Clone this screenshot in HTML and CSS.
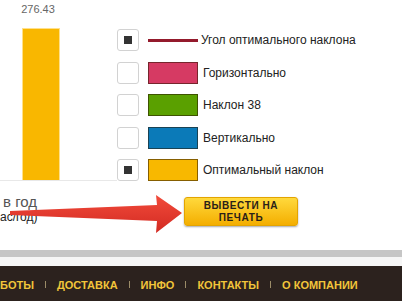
FILE: index.html
```html
<!doctype html>
<html lang="ru">
<head>
    <meta charset="UTF-8">
    <meta name="viewport" content="width=device-width, initial-scale=1.0">
    <title>Выработка</title>
    <link rel="stylesheet" href="styles.css">
</head>
<body>
<div class="chart-area">
    <div class="chart">
        <div class="bar-value">276.43</div>
        <div class="bar"></div>
    </div>
    <ul class="legend">
        <li class="legend-row">
            <span class="check checked"></span>
            <span class="line"></span>
            <span class="label label-line">Угол оптимального наклона</span>
        </li>
        <li class="legend-row">
            <span class="check"></span>
            <span class="swatch pink"></span>
            <span class="label">Горизонтально</span>
        </li>
        <li class="legend-row">
            <span class="check"></span>
            <span class="swatch green"></span>
            <span class="label">Наклон 38</span>
        </li>
        <li class="legend-row">
            <span class="check"></span>
            <span class="swatch blue"></span>
            <span class="label">Вертикально</span>
        </li>
        <li class="legend-row">
            <span class="check checked"></span>
            <span class="swatch yellow"></span>
            <span class="label">Оптимальный наклон</span>
        </li>
    </ul>
</div>
<div class="print-row">
    <div class="caption">
        <div class="caption-title">в год</div>
        <div class="caption-unit">ас/год)</div>
    </div>
    <button class="print-btn">ВЫВЕСТИ НА<br>ПЕЧАТЬ</button>
    <svg class="arrow" width="190" height="60" viewBox="0 181 190 60">
        <defs>
            <linearGradient id="arrowFill" x1="0" y1="0" x2="0" y2="1">
                <stop offset="0" stop-color="#f24b3b"/>
                <stop offset="1" stop-color="#d22a22"/>
            </linearGradient>
        </defs>
        <polygon fill="url(#arrowFill)" points="10,211 157,205 156,195 182,213 156,233 157,221 10,215"/>
    </svg>
</div>
<div class="gray-bar"></div>
<div class="gap-strip"></div>
<nav class="footer-nav">
    <a href="#">БОТЫ</a>
    <span class="sep"></span>
    <a href="#">ДОСТАВКА</a>
    <span class="sep"></span>
    <a href="#">ИНФО</a>
    <span class="sep"></span>
    <a href="#">КОНТАКТЫ</a>
    <span class="sep"></span>
    <a href="#">О КОМПАНИИ</a>
</nav>
</body>
</html>
```

FILE: styles.css
```css
*
{
    box-sizing: border-box;
}

body
{
    margin: 0;
    background-color: #fff;
    font-family: "Liberation Sans", Arial, sans-serif;
    overflow: hidden;
}

.chart-area
{
    display: flex;
    height: 181px;
}

.chart
{
    width: 117px;
    border-bottom: 1px solid #e8e8e8;
    padding-left: 22px;
}

.bar-value
{
    width: 38px;
    padding-top: 3px;
    height: 28px;
    font-size: 11px;
    color: #666;
    text-align: center;
    margin-left: -3px;
}

.bar
{
    width: 38px;
    height: 152px;
    background-color: #f9b700;
    border: 1px solid #ffe08a;
    border-bottom: none;
}

.legend
{
    list-style: none;
    margin: 0;
    padding: 29px 0 0 0;
    display: flex;
    flex-direction: column;
    gap: 10.5px;
}

.legend-row
{
    display: flex;
    align-items: center;
    height: 22px;
}

.check
{
    width: 22px;
    height: 22px;
    border: 1px solid #d2d2d2;
    border-radius: 3px;
    display: flex;
    align-items: center;
    justify-content: center;
    background-color: #fff;
}

.check.checked::after
{
    content: "";
    width: 8px;
    height: 8px;
    background-color: #333;
}

.line
{
    width: 50px;
    height: 3px;
    margin-left: 9px;
    background-color: #941a2c;
}

.swatch
{
    width: 50px;
    height: 22px;
    margin-left: 9px;
    border: 1px solid rgba(40, 20, 0, 0.55);
}

.pink
{
    background-color: #d63a63;
}

.green
{
    background-color: #5aa000;
}

.blue
{
    background-color: #0b7ab8;
}

.yellow
{
    background-color: #f8b800;
}

.label
{
    margin-left: 5px;
    font-size: 12px;
    color: #222;
}

.label-line
{
    margin-left: 3px;
}

.print-row
{
    position: relative;
    display: flex;
    height: 69px;
    padding-top: 16px;
}

.caption
{
    width: 184px;
    margin-top: -4px;
}

.caption-title
{
    font-size: 15px;
    line-height: 17px;
    color: #555;
    padding-left: 3px;
}

.caption-unit
{
    font-size: 12px;
    line-height: 14px;
    color: #222;
}

.print-btn
{
    width: 114px;
    height: 29px;
    padding: 0;
    border: 1px solid #e3a400;
    border-radius: 3px;
    background: linear-gradient(#ffd93c, #f4ae00);
    box-shadow: 0 1px 2px rgba(0, 0, 0, 0.35);
    font-family: "Liberation Sans", Arial, sans-serif;
    font-weight: bold;
    font-size: 10px;
    line-height: 11.5px;
    letter-spacing: 0.6px;
    color: #2a2118;
    text-align: center;
}

.arrow
{
    position: absolute;
    left: 0;
    top: 0;
}

.gray-bar
{
    height: 7px;
    background-color: #c6c6c6;
}

.gap-strip
{
    height: 9px;
    background-color: #f6f6f6;
}

.footer-nav
{
    height: 35px;
    background-color: #2c221e;
    display: flex;
    align-items: center;
    padding: 2px 0 0 0;
}

.footer-nav a
{
    color: #f2c53a;
    font-size: 11px;
    font-weight: bold;
    text-decoration: none;
}

.sep
{
    width: 1px;
    height: 7px;
    margin: 0 11px;
    background-color: #9c8c68;
}
```
